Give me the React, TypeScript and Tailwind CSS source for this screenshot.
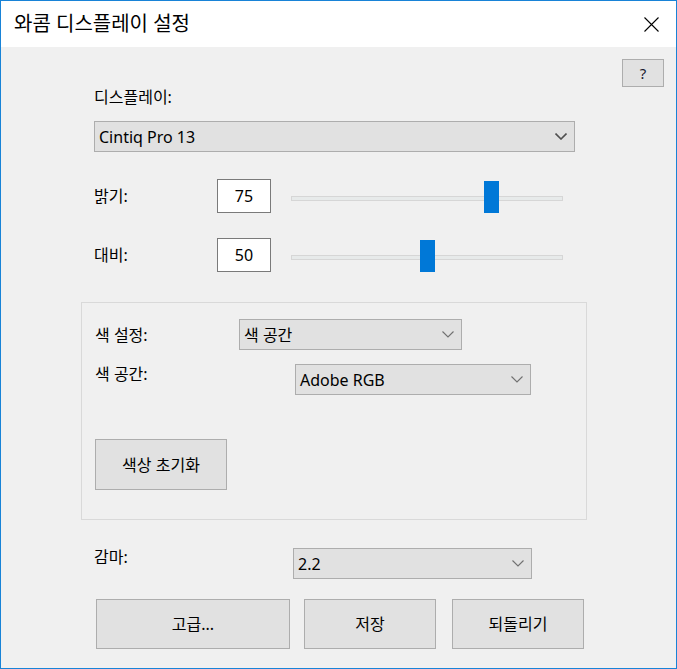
import React from "react";

const FONT = "font-['Noto_Sans','Noto_Sans_CJK_KR',sans-serif]";

function Chevron({ dark }: { dark?: boolean }) {
  return (
    <svg width="12" height="7" viewBox="0 0 12 7" fill="none">
      <path
        d="M0.5 0.5 L6 6 L11.5 0.5"
        stroke={dark ? "#505050" : "#707070"}
        strokeWidth={dark ? 1.6 : 1.1}
      />
    </svg>
  );
}

function Combo({ value, className, dark }: { value: string; className: string; dark?: boolean }) {
  return (
    <div
      className={`flex items-center justify-between border border-[#adadad] bg-[#e1e1e1] pl-[4px] pr-[7px] text-[16px] text-black ${className}`}
    >
      <span>{value}</span>
      <Chevron dark={dark} />
    </div>
  );
}

function Btn({ label, className }: { label: string; className: string }) {
  return (
    <button
      className={`flex items-center justify-center border border-[#adadad] bg-[#e1e1e1] text-[16px] text-black ${className}`}
    >
      {label}
    </button>
  );
}

function SliderRow({ label, value }: { label: string; value: number }) {
  const left = Math.round((value / 100) * (272 - 15));
  return (
    <div className="flex items-center h-[34px]">
      <span className="w-[123px] text-[16px] text-black">{label}</span>
      <div className="w-[54px] h-[34px] border border-[#7a7a7a] bg-white flex items-center justify-center text-[16px] text-black">
        {value}
      </div>
      <div className="relative ml-[20px] w-[272px] h-[34px]">
        <div className="absolute left-0 right-0 top-[17px] h-[5px] bg-[#e7eaea] border border-[#d6d6d6]" />
        <div className="absolute top-[2px] w-[15px] h-[32px] bg-[#0078d7]" style={{ left }} />
      </div>
    </div>
  );
}

export default function App() {
  return (
    <div className={`w-[677px] h-[669px] border border-[#1883d7] bg-[#f0f0f0] flex flex-col ${FONT}`}>
      <div className="h-[46px] bg-white flex items-center justify-between pl-[13px] pr-[17px]">
        <span className="text-[20px] text-black leading-none">와콤 디스플레이 설정</span>
        <svg width="15" height="15" viewBox="0 0 15 15">
          <path d="M0.5 0.5 L14.5 14.5 M14.5 0.5 L0.5 14.5" stroke="#000" strokeWidth="1.1" />
        </svg>
      </div>

      <div className="flex flex-col flex-1 pl-[93px]">
        <div className="mt-[12px] flex justify-end pr-[12px]">
          <button className="w-[42px] h-[28px] border border-[#adadad] bg-[#e1e1e1] text-[15px] text-[#1a1a2e] flex items-center justify-center">
            ?
          </button>
        </div>

        <div className="h-[20px] leading-[20px] text-[16px] text-black">디스플레이:</div>

        <Combo value="Cintiq Pro 13" className="mt-[14px] w-[481px] h-[31px]" dark />

        <div className="mt-[27px]">
          <SliderRow label="밝기:" value={75} />
        </div>
        <div className="mt-[25px]">
          <SliderRow label="대비:" value={50} />
        </div>

        <div className="mt-[30px] -ml-[13px] w-[506px] h-[218px] border border-[#d9d9d9] pl-[13px] pt-[16px] flex flex-col">
          <div className="flex items-center">
            <span className="w-[144px] text-[16px] text-black">색 설정:</span>
            <Combo value="색 공간" className="w-[223px] h-[31px]" />
          </div>
          <div className="mt-[14px] flex items-start">
            <span className="w-[200px] text-[16px] leading-[20px] text-black">색 공간:</span>
            <Combo value="Adobe RGB" className="w-[236px] h-[31px]" />
          </div>
          <Btn label="색상 초기화" className="mt-[44px] w-[132px] h-[51px]" />
        </div>

        <div className="mt-[28px] flex items-start">
          <span className="w-[199px] text-[16px] leading-[18px] text-black">감마:</span>
          <Combo value="2.2" className="w-[239px] h-[31px]" />
        </div>

        <div className="mt-[20px] ml-[2px] flex">
          <Btn label="고급..." className="w-[194px] h-[50px]" />
          <Btn label="저장" className="ml-[14px] w-[132px] h-[50px]" />
          <Btn label="되돌리기" className="ml-[16px] w-[132px] h-[50px]" />
        </div>
      </div>
    </div>
  );
}
